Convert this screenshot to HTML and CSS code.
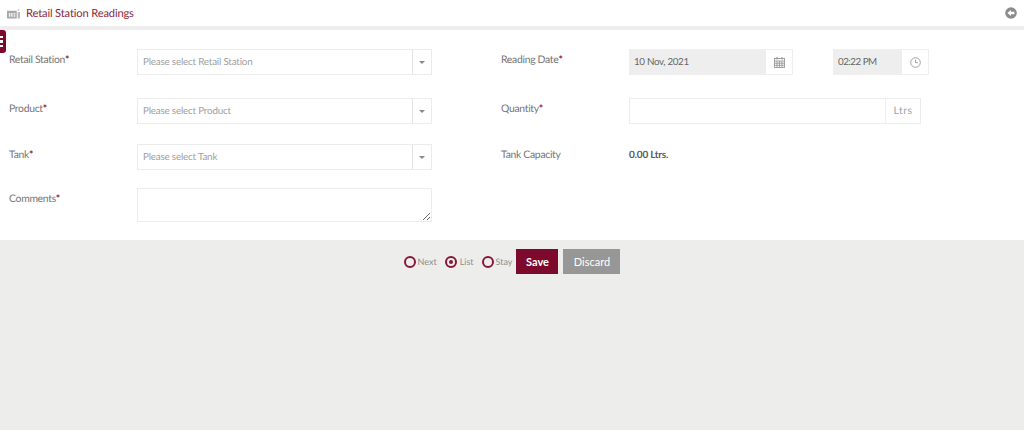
FILE: index.html
```html
<!DOCTYPE html>
<html lang="en">
<head>
<meta charset="utf-8">
<title>Retail Station Readings</title>
<link rel="stylesheet" href="styles.css">
</head>
<body>
<header class="page-header">
  <div class="title-wrap">
    <svg class="title-icon" width="13" height="11" viewBox="0 0 14 11"><path d="M0 2.5h10.5V11H1a1 1 0 0 1-1-1z" fill="#a8a8a8"/><path d="M2 5h1.6v4H2zM4.5 5H6v4H4.5zM7 5h2v1.5H7zM7 7.5h2V9H7z" fill="#f2f2f2"/><path d="M11.5 1h1.6v1.5h-1.6zM11.5 4H14v6a1 1 0 0 1-1 1h-1.5z" fill="#bbb"/></svg>
    <h1 class="title">Retail Station Readings</h1>
  </div>
  <svg class="back-icon" width="12" height="12" viewBox="0 0 12 12"><circle cx="6" cy="6" r="5.8" fill="#8c8c8c"/><path d="M2.4 6 6 3v1.8h3.4v2.4H6V9z" fill="#fff"/></svg>
</header>
<main class="form-panel">
  <button class="side-tab" aria-label="Menu"><span></span><span></span><span></span></button>
  <div class="col col-left">
    <div class="row row-a">
      <label class="lbl">Retail Station<b>*</b></label>
      <div class="select"><span class="ph">Please select Retail Station</span><span class="caret-box"><i class="caret"></i></span></div>
    </div>
    <div class="row row-b">
      <label class="lbl">Product<b>*</b></label>
      <div class="select"><span class="ph">Please select Product</span><span class="caret-box"><i class="caret"></i></span></div>
    </div>
    <div class="row row-c">
      <label class="lbl">Tank<b>*</b></label>
      <div class="select"><span class="ph">Please select Tank</span><span class="caret-box"><i class="caret"></i></span></div>
    </div>
    <div class="row row-d">
      <label class="lbl">Comments<b>*</b></label>
      <textarea class="comments" aria-label="Comments"></textarea>
    </div>
  </div>
  <div class="col col-right">
    <div class="row row-a">
      <label class="lbl">Reading Date<b>*</b></label>
      <div class="group date-group">
        <span class="ro date-val">10 Nov, 2021</span>
        <span class="addon">
          <svg width="11" height="11" viewBox="0 0 11 11" fill="none" stroke="#999" stroke-width=".9"><rect x=".5" y="1.5" width="10" height="9"/><path d="M.5 4h10M.5 6.2h10M.5 8.3h10M3 4v6.5M5.5 4v6.5M8 4v6.5"/><path d="M3 0v2.4M8 0v2.4" stroke-width="1.2"/></svg>
        </span>
      </div>
      <div class="group time-group">
        <span class="ro time-val">02:22 PM</span>
        <span class="addon">
          <svg width="11" height="11" viewBox="0 0 11 11" fill="none" stroke="#999" stroke-width=".9"><circle cx="5.5" cy="5.5" r="4.8"/><path d="M5.5 2.6v3.1H8"/></svg>
        </span>
      </div>
    </div>
    <div class="row row-b">
      <label class="lbl">Quantity<b>*</b></label>
      <div class="group qty-group"><span class="qty-input"></span><span class="unit">Ltrs</span></div>
    </div>
    <div class="row row-c row-cap">
      <label class="lbl">Tank Capacity</label>
      <span class="capacity">0.00 Ltrs.</span>
    </div>
  </div>
</main>
<footer class="actions">
  <span class="radio"><i class="dot"></i>Next</span>
  <span class="radio on"><i class="dot"></i>List</span>
  <span class="radio"><i class="dot"></i>Stay</span>
  <button class="btn save">Save</button>
  <button class="btn discard">Discard</button>
</footer>
</body>
</html>
```
FILE: styles.css
```css
* { box-sizing: border-box; }
html, body { height: 100%; }
body {
  margin: 0;
  background: #ededeb;
  font-family: Lato, "Open Sans", sans-serif;
  font-size: 10.4px;
  color: #777;
  overflow: hidden;
  text-rendering: geometricPrecision;
}
.page-header {
  height: 30px;
  background: #fff;
  border-bottom: 4px solid #eeeeee;
  display: flex;
  align-items: center;
  justify-content: space-between;
  padding: 0 7px;
}
.title-wrap { display: flex; align-items: center; gap: 6px; }
.title {
  margin: 0;
  font-size: 11.2px;
  font-weight: 400;
  letter-spacing: -.17px;
  color: #8c2a40;
}
.form-panel {
  position: relative;
  height: 210px;
  background: #fff;
  display: flex;
  padding: 19px 0 0 9px;
}
.side-tab {
  position: absolute;
  left: 0;
  top: 0;
  width: 6px;
  height: 23px;
  padding: 0;
  border: 0;
  border-radius: 0 3px 3px 0;
  background: #7d0a2c;
  display: flex;
  flex-direction: column;
  justify-content: center;
  align-items: flex-start;
  gap: 2px;
}
.side-tab span { width: 2.5px; height: 2.5px; background: #fff; }
.col-left { width: 492px; }
.col { display: flex; flex-direction: column; }
.row { display: flex; align-items: flex-start; height: 26px; }
.row-a { margin-bottom: 23px; }
.row-b { margin-bottom: 20px; }
.row-c { margin-bottom: 18px; }
.row-d { height: 34px; }
.lbl {
  width: 128px;
  flex: none;
  padding-top: 5px;
  line-height: 13px;
  letter-spacing: -.3px;
  color: #767676;
}
.lbl b { color: #8c1236; font-weight: 700; }
.select {
  width: 295px;
  height: 26px;
  border: 1px solid #ececec;
  display: flex;
  align-items: center;
  justify-content: space-between;
}
.ph { padding-left: 5px; font-size: 9.8px; letter-spacing: -.18px; color: #a0a0a0; }
.caret-box {
  width: 19px;
  height: 100%;
  border-left: 1px solid #e2e2e2;
  display: flex;
  align-items: center;
  justify-content: center;
}
.caret {
  width: 0;
  height: 0;
  border-left: 3px solid transparent;
  border-right: 3px solid transparent;
  border-top: 3px solid #888;
}
.comments {
  display: block;
  width: 295px;
  height: 34px;
  margin: 0;
  border: 1px solid #ececec;
  border-radius: 0;
  outline: 0;
  background: #fff;
}
.group { display: flex; height: 26px; }
.ro {
  display: flex;
  align-items: center;
  background: #eeeeee;
  font-size: 9.8px;
  color: #666;
}
.date-val { width: 137px; padding-left: 5px; letter-spacing: -.33px; }
.time-val { width: 69px; padding-left: 5px; letter-spacing: -.5px; }
.addon {
  width: 27px;
  border: 1px solid #eee;
  border-left: 0;
  display: flex;
  align-items: center;
  justify-content: center;
}
.time-group { margin-left: 40px; }
.qty-group { width: 292px; border: 1px solid #ececec; }
.qty-input { flex: 1; }
.unit {
  width: 35px;
  border-left: 1px solid #eee;
  display: flex;
  align-items: center;
  justify-content: center;
  color: #a3a3a3;
  font-size: 10.5px;
  letter-spacing: .5px;
}
.capacity {
  padding-top: 5px;
  line-height: 13px;
  font-size: 10px;
  letter-spacing: -.2px;
  color: #5a5a5a;
  font-weight: 700;
}
.actions {
  display: flex;
  align-items: center;
  justify-content: center;
  padding: 9px 0 0;
  font-size: 9px;
  color: #8f8f8f;
}
.radio { display: flex; align-items: center; gap: 2px; margin-right: 8px; }
.radio:nth-child(2) { gap: 3px; margin-right: 8px; }
.radio:nth-child(3) { margin-right: 4px; }
.dot {
  width: 12px;
  height: 12px;
  border: 2px solid #85183a;
  border-radius: 50%;
  display: flex;
  align-items: center;
  justify-content: center;
}
.on .dot::after {
  content: "";
  width: 4px;
  height: 4px;
  border-radius: 50%;
  background: #85183a;
}
.btn {
  height: 25px;
  padding: 0;
  border: 0;
  font-family: inherit;
  font-size: 11px;
  color: #fff;
}
.save { width: 42px; background: #7d0a2c; font-weight: 700; }
.discard { width: 57px; margin-left: 5px; background: #979797; }
```
